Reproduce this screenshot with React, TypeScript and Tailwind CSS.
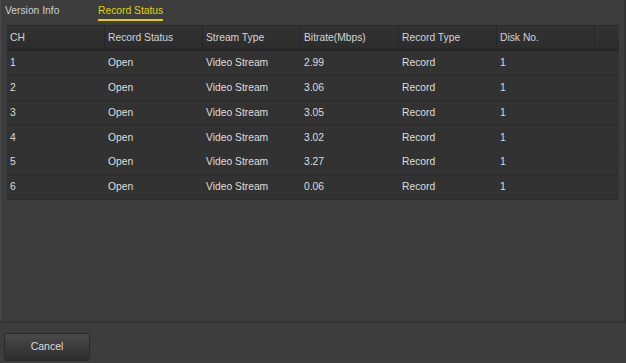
import React from 'react'

const columns = ['CH', 'Record Status', 'Stream Type', 'Bitrate(Mbps)', 'Record Type', 'Disk No.']

const rows = [
  ['1', 'Open', 'Video Stream', '2.99', 'Record', '1'],
  ['2', 'Open', 'Video Stream', '3.06', 'Record', '1'],
  ['3', 'Open', 'Video Stream', '3.05', 'Record', '1'],
  ['4', 'Open', 'Video Stream', '3.02', 'Record', '1'],
  ['5', 'Open', 'Video Stream', '3.27', 'Record', '1'],
  ['6', 'Open', 'Video Stream', '0.06', 'Record', '1'],
]

// 顶部标签
function Tabs() {
  return (
    <div className="flex h-[25px] items-start pl-[4px] pt-[3px]">
      <span className="w-[93px] text-[#d0d0d0]">Version Info</span>
      <span className="border-b-2 border-[#e6d200] pb-[1px] text-[#e6d200]">Record Status</span>
    </div>
  )
}

// 表格
function RecordTable() {
  return (
    <div className="ml-[6px] mr-[5px] border-t border-[#2a2a2a] bg-[#323232]">
      <div className="flex h-[25px] items-center border-b-2 border-[#262626] bg-gradient-to-b from-[#333333] to-[#2c2c2c] text-[#d4d4d4]">
        {columns.map((c) => (
          <div key={c} className="flex h-full w-[98px] items-center border-r border-[#262626] pl-[3px]">
            {c}
          </div>
        ))}
        <div className="h-full flex-1" />
      </div>
      {rows.map((r) => (
        <div key={r[0]} className="flex h-[24.8px] items-center border-b border-[#2a2a2a] text-[#dedede]">
          {r.map((v, i) => (
            <div key={i} className="w-[98px] pl-[3px]">
              {v}
            </div>
          ))}
        </div>
      ))}
    </div>
  )
}

export default function App() {
  return (
    <div className="flex h-[363px] w-[626px] flex-col bg-[#3d3d3d] text-[10.3px] font-['Liberation_Sans',Arial,sans-serif]">
      <div className="flex h-[323px] flex-col border-b-2 border-r-2 border-[#333333] border-l border-l-[#4a4a4a] bg-[#3d3d3d]">
        <Tabs />
        <RecordTable />
      </div>
      <div className="flex flex-1 items-start pl-[4px] pt-[10px]">
        <button className="h-[28px] w-[86px] rounded-[2px] border border-[#2a2a2a] bg-gradient-to-b from-[#4a4a4a] to-[#2e2e2e] text-[10.5px] text-[#dcdcdc]">
          Cancel
        </button>
      </div>
    </div>
  )
}
